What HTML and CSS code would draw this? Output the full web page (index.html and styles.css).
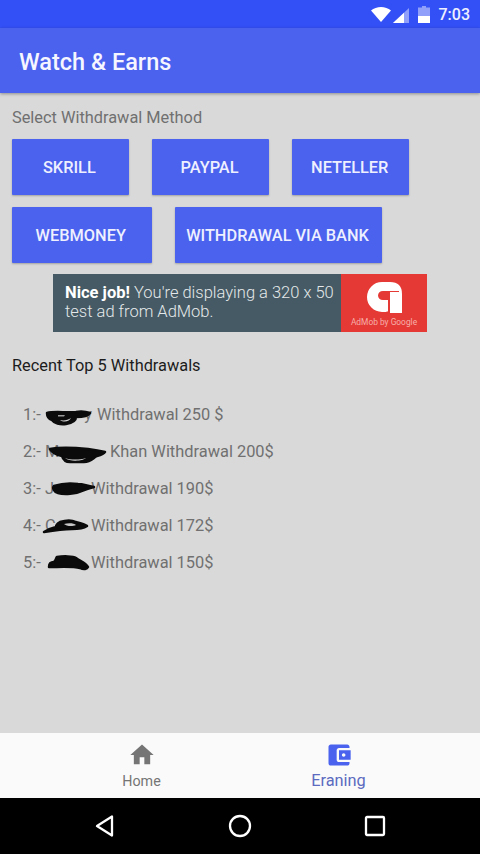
FILE: index.html
```html
<!DOCTYPE html>
<html lang="en">
<head>
<meta charset="utf-8">
<title>Watch &amp; Earns</title>
<link rel="stylesheet" href="styles.css">
</head>
<body>
<div class="phone">
  <div class="status">
    <svg class="st-wifi" viewBox="0 0 20 15"><path d="M0 3.500C2.800 1.200 6.200 0 10 0s7.200 1.200 10 3.500L10 15z" fill="#fff"/></svg>
    <svg class="st-signal" viewBox="0 0 16 15"><path d="M16 0v15H0z" fill="#fff" opacity=".45"/><path d="M11 4.700V15H0z" fill="#fff"/></svg>
    <svg class="st-batt" viewBox="0 0 12 17"><path d="M4 0h4v1.500h4V17H0V1.500h4z" fill="#fff" opacity=".45"/><path d="M0 10h12v7H0z" fill="#fff"/></svg>
    <span class="st-time">7:03</span>
  </div>
  <header class="appbar"><h1 class="title">Watch &amp; Earns</h1></header>
  <main class="main">
    <p class="label">Select Withdrawal Method</p>
    <div class="btn-row">
      <button class="btn btn-a">SKRILL</button>
      <button class="btn btn-a">PAYPAL</button>
      <button class="btn btn-a">NETELLER</button>
    </div>
    <div class="btn-row">
      <button class="btn btn-b">WEBMONEY</button>
      <button class="btn btn-c">WITHDRAWAL VIA BANK</button>
    </div>
    <div class="ad">
      <div class="ad-text"><b>Nice job!</b> You're displaying a 320 x 50 test ad from AdMob.</div>
      <div class="ad-logo">
        <svg class="ad-mark" viewBox="0 0 35 31"><path d="M15 0H23Q35 0 35 12V31H22V29C20 30 17 30 15 30A15 15 0 0 1 15 0Z" fill="#fff"/><path d="M16 9H32V10H23V31H21V18H16C13 18 11 16 11 13.500C11 11 13 9 16 9Z" fill="#e53935"/></svg>
        <span class="ad-by">AdMob by Google</span>
      </div>
    </div>
    <h2 class="recent">Recent Top 5 Withdrawals</h2>
    <ul class="list">
      <li class="item"><span class="num">1:-</span><span class="mask m1">y<svg viewBox="0 0 46 16"><path class="ink" d="M1 3C8 1 20 3 30 2C36 1 41 2 44 3C42 6 36 7 30 7C30 11 26 13 20 14C14 15 8 13 6 10C3 9 1 6 1 3Z"/><path d="M12 5H19L18 6.500H12Z" fill="#9a9a9a"/><path d="M14 10C18 11 22 10 25 8C24 11 18 13 14 10Z" fill="#d0d0d0"/></svg></span>Withdrawal 250 $</li>
      <li class="item"><span class="num">2:-</span><span class="mask m2">M<svg viewBox="0 0 59 17"><path class="ink" d="M2 3C12 1 30 2 40 3C48 4 53 5 57 6C56 8 53 9 49 10C45 12 43 16 36 16H22C17 16 15 13 14 10C9 9 4 7 2 3Z"/><path d="M17 12C22 14 32 14 38 12C35 15 22 16 17 12Z" fill="#d9d9d9"/></svg></span>Khan Withdrawal 200$</li>
      <li class="item"><span class="num">3:-</span><span class="mask m3">J<svg viewBox="0 0 45 14"><path class="ink" d="M4 4C10 2 20 1 28 2C34 2 36 4 44 5C40 6 36 7 32 9C26 12 14 13 8 11C4 10 2 6 4 4Z"/></svg></span>Withdrawal 190$</li>
      <li class="item"><span class="num">4:-</span><span class="mask m4">C<svg viewBox="0 0 46 14"><path class="ink" d="M18 3C24 1 30 1 34 3C38 4 43 5 45 7C42 9 36 10 30 10C22 10 14 11 2 13C5 11 10 9 14 8C14 6 16 4 18 3Z"/><path d="M22 5C26 4 32 4 34 6C30 8 24 7 22 5Z" fill="#c8c8c8"/></svg></span>Withdrawal 172$</li>
      <li class="item"><span class="num">5:-</span><span class="mask m5"><svg viewBox="0 0 42 16"><path class="ink" d="M10 2C16 1 26 1 29 3C33 6 39 8 41 12C40 14 37 15 33 13C26 11 12 12 2 12C2 9 3 7 7 7C9 5 9 3 10 2Z"/></svg></span>Withdrawal 150$</li>
    </ul>
  </main>
  <nav class="tabs">
    <div class="tab">
      <svg class="tab-icon" viewBox="0 0 24 24"><path d="M10 20v-6h4v6h5v-8h3L12 3 2 12h3v8z" fill="#757575"/></svg>
      <span class="tab-home">Home</span>
    </div>
    <div class="tab">
      <svg class="tab-icon" viewBox="0 0 24 24"><path d="M21 18v1c0 1.100-.9 2-2 2H5c-1.110 0-2-.9-2-2V5c0-1.100.89-2 2-2h14c1.100 0 2 .9 2 2v1h-9c-1.110 0-2 .9-2 2v8c0 1.100.89 2 2 2h9zm-9-2h10V8H12v8zm4-2.500c-.83 0-1.500-.67-1.500-1.500s.67-1.500 1.500-1.500 1.500.67 1.500 1.500-.67 1.500-1.500 1.500z" fill="#4a62ee"/></svg>
      <span class="tab-earn">Eraning</span>
    </div>
  </nav>
  <div class="sysnav">
    <svg class="sys-icon" viewBox="0 0 24 24"><path d="M19 2.500v19L4 12z" fill="none" stroke="#fff" stroke-width="2.300" stroke-linejoin="round"/></svg>
    <svg class="sys-icon" viewBox="0 0 24 24"><circle cx="12" cy="12" r="10" fill="none" stroke="#fff" stroke-width="2.300"/></svg>
    <svg class="sys-icon" viewBox="0 0 24 24"><rect x="3" y="3" width="18" height="18" rx="1" fill="none" stroke="#fff" stroke-width="2.300"/></svg>
  </div>
</div>
</body>
</html>
```

FILE: styles.css
```css
* { box-sizing: border-box; }
html, body { margin: 0; padding: 0; }
body { font-family: Roboto, "Liberation Sans", sans-serif; background: #d9d9d9; }
.phone { width: 480px; height: 854px; display: flex; flex-direction: column; overflow: hidden; }

.status { height: 28px; background: #3350f6; display: flex; align-items: center; justify-content: flex-end; padding: 1px 10px 0 0; color: #fff; }
.st-wifi { width: 20px; height: 15px; margin-right: 2px; }
.st-signal { width: 16px; height: 15px; margin-right: 9px; margin-top: 1px; }
.st-batt { width: 12px; height: 17px; margin-right: 9px; }
.st-time { font-size: 16px; font-weight: 500; color: #eef0ff; }

.appbar { height: 65px; background: #4a62ee; display: flex; align-items: center; padding: 3px 0 0 19px; box-shadow: 0 1px 3px rgba(0,0,0,.35); position: relative; }
.title { margin: 0; font-size: 23.5px; font-weight: 500; color: #f5f6ff; }

.main { flex: 1; background: #d9d9d9; padding: 15px 0 0 12px; }
.label { margin: 0 0 11px; font-size: 16.35px; line-height: 20px; color: #707070; }
.btn-row { display: flex; gap: 23.5px; margin-bottom: 12px; }
.btn { height: 56px; border: 0; border-radius: 1px; padding: 0 2px 0 0; background: #4a62ee; color: #eef0ff; font: 500 16.35px Roboto, sans-serif; box-shadow: 0 1px 2px rgba(0,0,0,.25); }
.btn-a { width: 116.7px; }
.btn-b { width: 139.5px; }
.btn-c { width: 207px; }

.ad { width: 374px; height: 58px; margin: -1px 0 0 41px; display: flex; background: #455a64; }
.ad-text { width: 288px; padding: 9px 0 0 12px; font-size: 16.5px; line-height: 19px; font-weight: 300; color: #e4e8ea; }
.ad-text b { font-weight: 700; color: #fff; }
.ad-logo { flex: 1; background: #e53935; display: flex; flex-direction: column; align-items: center; padding-top: 8px; }
.ad-mark { width: 35px; height: 31px; }
.ad-by { font-size: 8.4px; line-height: 12px; margin-top: 3px; color: #f6b0aa; }

.recent { margin: 24px 0 0; font-size: 16.35px; font-weight: 400; line-height: 20px; color: #1c1c1c; }
.list { list-style: none; margin: 20px 0 0; padding: 0 0 0 11px; }
.item { height: 37px; display: flex; align-items: center; font-size: 16.4px; color: #707070; white-space: nowrap; }
.num { width: 22px; }
.mask { position: relative; display: block; height: 20px; line-height: 20px; }
.mask svg { position: absolute; overflow: visible; }
.ink { fill: #0b0b0b; stroke: #0b0b0b; stroke-width: 2.5; stroke-linejoin: round; }
.m1 { width: 52px; text-align: right; padding-right: 5px; }
.m1 svg { left: 1px; top: 5px; width: 46px; height: 16px; }
.m2 { width: 65px; }
.m2 svg { left: 3px; top: 4px; width: 59px; height: 17px; }
.m3 { width: 46px; }
.m3 svg { left: 5px; top: 3px; width: 45px; height: 14px; }
.m4 { width: 46px; }
.m4 svg { left: -3px; top: 3px; width: 46px; height: 14px; }
.m5 { width: 46px; }
.m5 svg { left: 2px; top: 2px; width: 42px; height: 16px; }

.tabs { height: 65px; background: #fafafa; display: flex; padding: 0 43px; position: relative; }
.tab { flex: 1; display: flex; flex-direction: column; align-items: center; padding-top: 8px; }
.tab-icon { width: 28px; height: 28px; }
.tab-home { margin-top: 2px; height: 20px; font-size: 14.3px; line-height: 20px; color: #757575; }
.tab-earn { margin-top: 2px; height: 20px; font-size: 16.35px; line-height: 20px; color: #5c6bc0; }

.sysnav { height: 56px; background: #000; display: flex; align-items: center; justify-content: center; gap: 111px; padding-bottom: 0; }
.sys-icon { width: 24px; height: 24px; }
```
